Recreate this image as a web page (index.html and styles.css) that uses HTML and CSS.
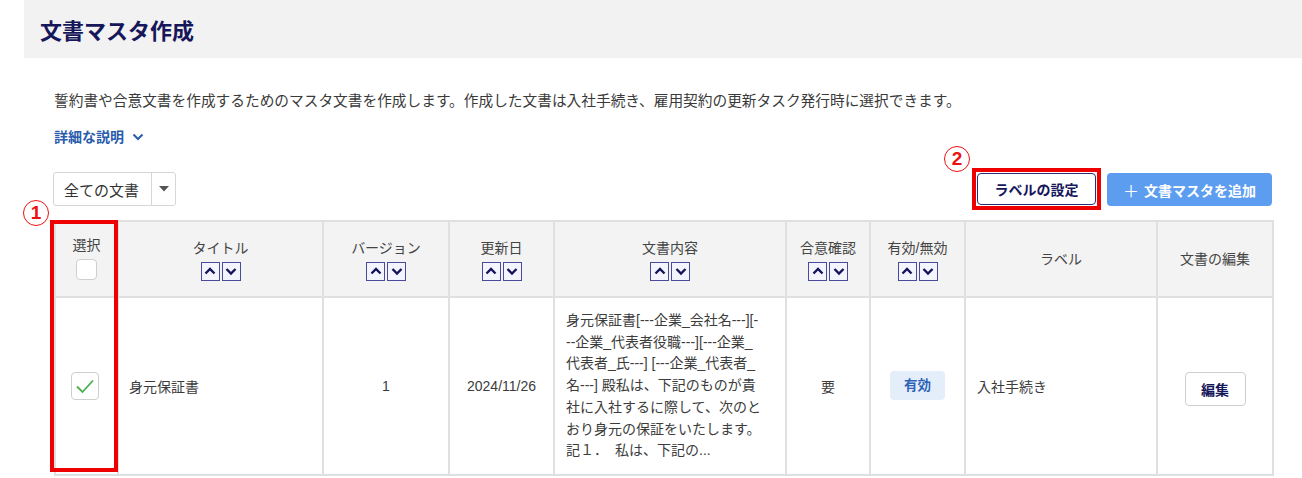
FILE: index.html
```html
<!DOCTYPE html>
<html lang="ja">
<head>
<meta charset="utf-8">
<title>文書マスタ作成</title>
<link rel="stylesheet" href="styles.css">
</head>
<body>
<div class="page">
  <header class="title-bar"><h1>文書マスタ作成</h1></header>
  <main class="content">
    <p class="desc">誓約書や合意文書を作成するためのマスタ文書を作成します。作成した文書は入社手続き、雇用契約の更新タスク発行時に選択できます。</p>
    <a class="details">詳細な説明<svg class="chev" width="12" height="8" viewBox="0 0 12 8"><polyline points="1.5,1.5 6,6 10.5,1.5" fill="none" stroke="#2a5cab" stroke-width="2"/></svg></a>
    <div class="toolbar">
      <div class="select">
        <span class="select-label">全ての文書</span>
        <span class="select-caret"><svg width="10" height="6" viewBox="0 0 10 6"><polygon points="0,0 10,0 5,5.5" fill="#555"/></svg></span>
      </div>
      <div class="actions">
        <span class="anno anno-2">2</span>
        <span class="hl"><button class="btn-outline">ラベルの設定</button></span>
        <button class="btn-primary"><span class="plus">＋</span>文書マスタを追加</button>
      </div>
    </div>
    <div class="table-wrap">
      <span class="anno anno-1">1</span>
      <div class="redbox"></div>
      <table class="grid">
        <colgroup>
          <col class="c-sel"><col class="c-title"><col class="c-ver"><col class="c-date"><col class="c-body"><col class="c-agree"><col class="c-valid"><col class="c-label"><col class="c-edit">
        </colgroup>
        <thead>
          <tr>
            <th><div class="th-name">選択</div><span class="cb cb-head"></span></th>
            <th><div class="th-name">タイトル</div><div class="sort"><span class="sbtn"><svg viewBox="0 0 16 16"><polyline points="3.5,10.5 8,6 12.5,10.5"/></svg></span><span class="sbtn"><svg viewBox="0 0 16 16"><polyline points="3.5,6 8,10.5 12.5,6"/></svg></span></div></th>
            <th><div class="th-name">バージョン</div><div class="sort"><span class="sbtn"><svg viewBox="0 0 16 16"><polyline points="3.5,10.5 8,6 12.5,10.5"/></svg></span><span class="sbtn"><svg viewBox="0 0 16 16"><polyline points="3.5,6 8,10.5 12.5,6"/></svg></span></div></th>
            <th><div class="th-name">更新日</div><div class="sort"><span class="sbtn"><svg viewBox="0 0 16 16"><polyline points="3.5,10.5 8,6 12.5,10.5"/></svg></span><span class="sbtn"><svg viewBox="0 0 16 16"><polyline points="3.5,6 8,10.5 12.5,6"/></svg></span></div></th>
            <th><div class="th-name">文書内容</div><div class="sort"><span class="sbtn"><svg viewBox="0 0 16 16"><polyline points="3.5,10.5 8,6 12.5,10.5"/></svg></span><span class="sbtn"><svg viewBox="0 0 16 16"><polyline points="3.5,6 8,10.5 12.5,6"/></svg></span></div></th>
            <th><div class="th-name">合意確認</div><div class="sort"><span class="sbtn"><svg viewBox="0 0 16 16"><polyline points="3.5,10.5 8,6 12.5,10.5"/></svg></span><span class="sbtn"><svg viewBox="0 0 16 16"><polyline points="3.5,6 8,10.5 12.5,6"/></svg></span></div></th>
            <th><div class="th-name">有効/無効</div><div class="sort"><span class="sbtn"><svg viewBox="0 0 16 16"><polyline points="3.5,10.5 8,6 12.5,10.5"/></svg></span><span class="sbtn"><svg viewBox="0 0 16 16"><polyline points="3.5,6 8,10.5 12.5,6"/></svg></span></div></th>
            <th><div class="th-name">ラベル</div></th>
            <th><div class="th-name">文書の編集</div></th>
          </tr>
        </thead>
        <tbody>
          <tr>
            <td class="center"><span class="cb cb-row"><svg width="20" height="16" viewBox="0 0 20 16"><polyline points="2,8.5 7.5,14 18,2.5" fill="none" stroke="#4caf50" stroke-width="1.8"/></svg></span></td>
            <td class="left pad-title">身元保証書</td>
            <td class="center">1</td>
            <td class="center">2024/11/26</td>
            <td class="body-text">身元保証書[---企業_会社名---][-<br>--企業_代表者役職---][---企業_<br>代表者_氏---] [---企業_代表者_<br>名---] 殿私は、下記のものが貴<br>社に入社するに際して、次のと<br>おり身元の保証をいたします。<br>記１．　私は、下記の...</td>
            <td class="center">要</td>
            <td class="center"><span class="badge">有効</span></td>
            <td class="left pad-label">入社手続き</td>
            <td class="center"><button class="btn-edit">編集</button></td>
          </tr>
        </tbody>
      </table>
    </div>
  </main>
</div>
</body>
</html>
```
FILE: styles.css
```css
* { box-sizing: border-box; }
html, body { margin: 0; padding: 0; background: #fff; }
body {
  font-family: "Liberation Sans", "Noto Sans CJK JP", sans-serif;
  color: #333;
  width: 1302px;
  height: 478px;
  overflow: hidden;
}
.page { width: 1302px; }
.title-bar {
  margin-left: 24px;
  height: 58px;
  background: #f2f2f2;
  display: flex;
  align-items: center;
  padding-left: 16px;
}
.title-bar h1 {
  margin: 0;
  font-size: 22px;
  font-weight: 700;
  color: #16165a;
}
.content {
  padding: 0 30px 0 54px;
}
.desc {
  margin: 33px 0 0 0;
  font-size: 14.7px;
  line-height: 20px;
  color: #3a3a3a;
}
.details {
  display: flex;
  align-items: center;
  gap: 8px;
  margin-top: 15px;
  height: 20px;
  font-size: 14px;
  font-weight: 700;
  color: #2a5cab;
}
.chev { margin-top: 1px; }
.toolbar {
  margin-top: 26px;
  height: 34px;
  display: flex;
  justify-content: space-between;
  align-items: flex-start;
}
.select {
  display: flex;
  height: 34px;
  width: 123px;
  border: 1px solid #d6d6d6;
  border-radius: 3px;
  background: #fff;
  margin-left: -1px;
}
.select-label {
  flex: 0 0 98px;
  display: flex;
  align-items: center;
  padding-left: 10px;
  font-size: 15px;
  color: #333;
  border-right: 1px solid #d6d6d6;
}
.select-caret {
  flex: 1;
  display: flex;
  align-items: center;
  justify-content: center;
}
.actions {
  position: relative;
  display: flex;
  gap: 6px;
  align-items: flex-start;
  margin-top: -4px;
}
.hl {
  display: block;
  border: 4px solid #ee0000;
  padding: 1px;
}
.btn-outline {
  display: block;
  height: 32px;
  width: 119px;
  border: 1px solid #2b2b78;
  border-radius: 4px;
  background: #fff;
  color: #16165a;
  font-family: inherit;
  font-size: 14px;
  font-weight: 700;
  padding: 0;
}
.btn-primary {
  height: 33px;
  width: 165px;
  margin-top: 5px;
  border: none;
  border-radius: 4px;
  background: #5c9df0;
  color: #fff;
  font-family: inherit;
  font-size: 14px;
  font-weight: 700;
  padding: 0;
  display: flex;
  align-items: center;
  justify-content: center;
  gap: 5px;
}
.plus { font-size: 16px; font-weight: 400; }

.anno {
  position: absolute;
  width: 26px;
  height: 26px;
  border: 1.3px solid #ee1111;
  border-radius: 50%;
  color: #ee1111;
  font-size: 19px;
  font-weight: 700;
  line-height: 23px;
  text-align: center;
  background: #fff;
}
.anno-2 { left: -28px; top: -22px; }
.anno-1 { left: -31px; top: -20px; }

.table-wrap {
  position: relative;
  margin-top: 14px;
  width: 1218px;
}
.redbox {
  position: absolute;
  left: -4px;
  top: 0;
  width: 68px;
  height: 252px;
  border: 4px solid #ee0000;
  pointer-events: none;
  z-index: 2;
}
.grid {
  width: 1218px;
  table-layout: fixed;
  border-collapse: collapse;
  font-size: 14px;
}
.c-sel { width: 63px; }
.c-title { width: 205px; }
.c-ver { width: 126px; }
.c-date { width: 105px; }
.c-body { width: 232px; }
.c-agree { width: 84px; }
.c-valid { width: 95px; }
.c-label { width: 192px; }
.c-edit { width: 116px; }

.grid th, .grid td {
  border: 2px solid #e0e0e0;
  padding: 0;
}
.grid th {
  background: #f3f3f3;
  height: 76px;
  font-weight: 400;
  color: #444;
  vertical-align: middle;
  text-align: center;
}
.th-name { line-height: 20px; font-size: 14px; }
.sort {
  display: flex;
  justify-content: center;
  gap: 2px;
  margin-top: 4px;
}
.sbtn {
  width: 19px;
  height: 19px;
  border: 1.5px solid #4a4a9c;
  background: #f4f4ff;
  display: flex;
  align-items: center;
  justify-content: center;
}
.sbtn svg { width: 16px; height: 16px; }
.sbtn polyline { fill: none; stroke: #14145a; stroke-width: 2.4; }
.cb {
  display: inline-flex;
  align-items: center;
  justify-content: center;
  border: 1px solid #cfcfcf;
  border-radius: 4px;
  background: #fff;
}
.cb-head { width: 21px; height: 21px; margin-top: 4px; }
.cb-row { width: 28px; height: 28px; vertical-align: middle; margin-right: 4px; }

.grid td {
  height: 176px;
  vertical-align: middle;
  color: #3c3c3c;
}
.center { text-align: center; }
.left { text-align: left; }
.pad-title { padding-left: 10px !important; }
.pad-label { padding-left: 11px !important; }
.body-text {
  padding: 12px 10px 12px 11px !important;
  line-height: 21.7px;
  font-size: 14px;
  color: #444;
}
.badge {
  display: inline-block;
  width: 55px;
  height: 29px;
  line-height: 29px;
  border-radius: 4px;
  background: #e4eefb;
  color: #2d63b5;
  font-weight: 700;
  font-size: 13.5px;
}
.btn-edit {
  width: 61px;
  height: 34px;
  border: 1px solid #cfcfcf;
  border-radius: 4px;
  background: #fff;
  color: #16165a;
  font-family: inherit;
  font-weight: 700;
  font-size: 14px;
  padding: 0;
  margin-top: 7px;
}
```
